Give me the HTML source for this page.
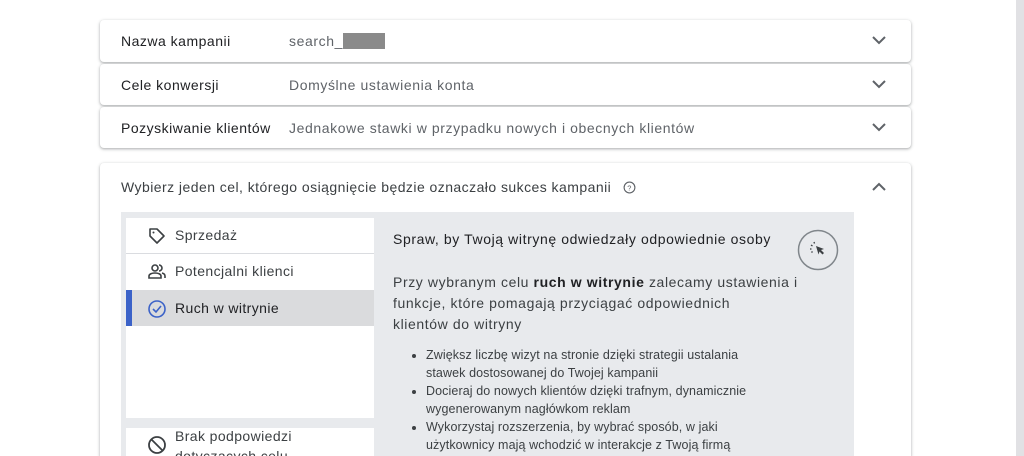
<!DOCTYPE html>
<html><head><meta charset="utf-8"><style>
html,body{margin:0;width:1024px;height:456px;overflow:hidden}
body{background:#fff;font-family:"Liberation Sans",Arial,sans-serif;color:#3c4043;position:relative;letter-spacing:0.5px}
.sb{position:absolute;left:1016px;top:0;width:8px;height:456px;background:#e1e1e4}
.card{position:absolute;left:100px;width:811px;background:#fff;border-radius:4px;box-shadow:0 1px 2px rgba(60,64,67,.3),0 1px 3px 1px rgba(60,64,67,.12)}
.row{height:42px;font-size:14px}
.lab{position:absolute;left:21px;top:13px;color:#202124}
.val{position:absolute;left:189px;top:13px;color:#5f6368;letter-spacing:0.6px}
.chev{position:absolute;right:24px;top:14px}
.panel{position:absolute;left:121px;top:212px;width:733px;height:244px;background:#e8eaed;overflow:hidden}
.list{position:absolute;left:5px;top:6px;width:248px;height:200px;background:#fff}
.it{position:absolute;left:0;width:248px;height:35px;font-size:14px;color:#3c4043;letter-spacing:0.4px}
.it span{position:absolute;left:49px;top:9px}
.it svg{position:absolute;left:21px;top:8px}
</style></head><body>
<div class="sb"></div>
<div class="card row" style="top:20px"><span class="lab">Nazwa kampanii</span><span class="val">search_<span style="display:inline-block;width:42px;height:16px;background:#8a8a8a;vertical-align:-3px"></span></span><svg class="chev" width="16" height="12" viewBox="0 0 16 12"><path d="M2 3l6 6 6-6" fill="none" stroke="#5f6368" stroke-width="2"/></svg></div>
<div class="card row" style="top:64px;height:41px"><span class="lab">Cele konwersji</span><span class="val">Domyślne ustawienia konta</span><svg class="chev" width="16" height="12" viewBox="0 0 16 12"><path d="M2 3l6 6 6-6" fill="none" stroke="#5f6368" stroke-width="2"/></svg></div>
<div class="card row" style="top:107px;height:41px"><span class="lab">Pozyskiwanie klientów</span><span class="val">Jednakowe stawki w przypadku nowych i obecnych klientów</span><svg class="chev" width="16" height="12" viewBox="0 0 16 12"><path d="M2 3l6 6 6-6" fill="none" stroke="#5f6368" stroke-width="2"/></svg></div>
<div class="card" style="top:163px;height:293px;border-radius:4px 4px 0 0">
<span style="position:absolute;left:21px;top:16px;font-size:14px;color:#3c4043;letter-spacing:0.45px">Wybierz jeden cel, którego osiągnięcie będzie oznaczało sukces kampanii</span>
<svg style="position:absolute;left:523px;top:18px" width="13" height="13" viewBox="0 0 14 14"><circle cx="7" cy="7" r="5.8" fill="none" stroke="#5f6368" stroke-width="1.2"/><text x="7" y="10" font-size="8" text-anchor="middle" fill="#5f6368" font-family="Liberation Sans">?</text></svg>
<svg style="position:absolute;right:24px;top:18px" width="16" height="12" viewBox="0 0 16 12"><path d="M2 9l6-6 6 6" fill="none" stroke="#5f6368" stroke-width="2"/></svg>
</div>
<div class="panel">
<div class="list">
<div class="it" style="top:0;border-bottom:1px solid #dadce0"><svg width="20" height="20" viewBox="0 0 20 20"><path d="M3 3h7l7 7-7 7-7-7z" fill="none" stroke="#3c4043" stroke-width="1.6" stroke-linejoin="round"/><circle cx="6.5" cy="6.5" r="1" fill="#3c4043"/></svg><span>Sprzedaż</span></div>
<div class="it" style="top:36px"><svg width="20" height="20" viewBox="0 0 20 20"><circle cx="8" cy="6" r="3" fill="none" stroke="#3c4043" stroke-width="1.6"/><path d="M2 16v-2c0-2 3-3 6-3s6 1 6 3v2z" fill="none" stroke="#3c4043" stroke-width="1.6"/><path d="M12 3a3 3 0 010 6M15 11c2 .5 3 1.5 3 3v2" fill="none" stroke="#3c4043" stroke-width="1.6"/></svg><span>Potencjalni klienci</span></div>
<div class="it" style="top:72px;height:36px;background:#dadbdd"><div style="position:absolute;left:0;top:0;width:6px;height:36px;background:#3b62c8"></div><svg width="20" height="20" viewBox="0 0 20 20" style="top:9px"><circle cx="10" cy="10" r="8" fill="none" stroke="#3b62c8" stroke-width="1.6"/><path d="M6 10l3 3 5-6" fill="none" stroke="#3b62c8" stroke-width="1.6"/></svg><span style="top:10px;color:#202124">Ruch w witrynie</span></div>
</div>
<div style="position:absolute;left:5px;top:216px;width:248px;height:40px;background:#fff">
<svg style="position:absolute;left:21px;top:7px" width="20" height="20" viewBox="0 0 20 20"><circle cx="10" cy="10" r="8" fill="none" stroke="#3c4043" stroke-width="1.8"/><path d="M4.5 4.5l11 11" stroke="#3c4043" stroke-width="1.8"/></svg>
<span style="position:absolute;left:49px;top:-2px;font-size:14px;line-height:20px;color:#3c4043;letter-spacing:0.4px">Brak podpowiedzi<br>dotyczących celu</span></div>
<div style="position:absolute;left:272px;top:19px;font-size:14px;color:#202124;letter-spacing:0.6px">Spraw, by Twoją witrynę odwiedzały odpowiednie osoby</div>
<svg style="position:absolute;left:676px;top:17px" width="42" height="42" viewBox="0 0 42 42"><circle cx="21" cy="21" r="19.5" fill="none" stroke="#80868b" stroke-width="1.5"/><path d="M19 17l8 3-3 1 3 3-1.5 1.5-3-3-1 3z" fill="#3c4043"/><path d="M14 16l1.5 1M17 13l.5 1.5M13 20h1.5M14.5 23.5l1-1" stroke="#3c4043" stroke-width="1.3"/></svg>
<div style="position:absolute;left:272px;top:60px;width:420px;white-space:nowrap;font-size:14px;line-height:21px;color:#3c4043;letter-spacing:0.6px">Przy wybranym celu <b style="color:#202124">ruch w witrynie</b> zalecamy ustawienia i<br>funkcje, które pomagają przyciągać odpowiednich<br>klientów do witryny</div>
<ul style="position:absolute;left:272px;top:134px;margin:0;padding-left:33px;width:345px;font-size:12.5px;line-height:18px;color:#3c4043;letter-spacing:0.1px">
<li>Zwiększ liczbę wizyt na stronie dzięki strategii ustalania stawek dostosowanej do Twojej kampanii</li>
<li>Docieraj do nowych klientów dzięki trafnym, dynamicznie wygenerowanym nagłówkom reklam</li>
<li>Wykorzystaj rozszerzenia, by wybrać sposób, w jaki użytkownicy mają wchodzić w interakcje z Twoją firmą</li>
</ul>
</div>
</body></html>
